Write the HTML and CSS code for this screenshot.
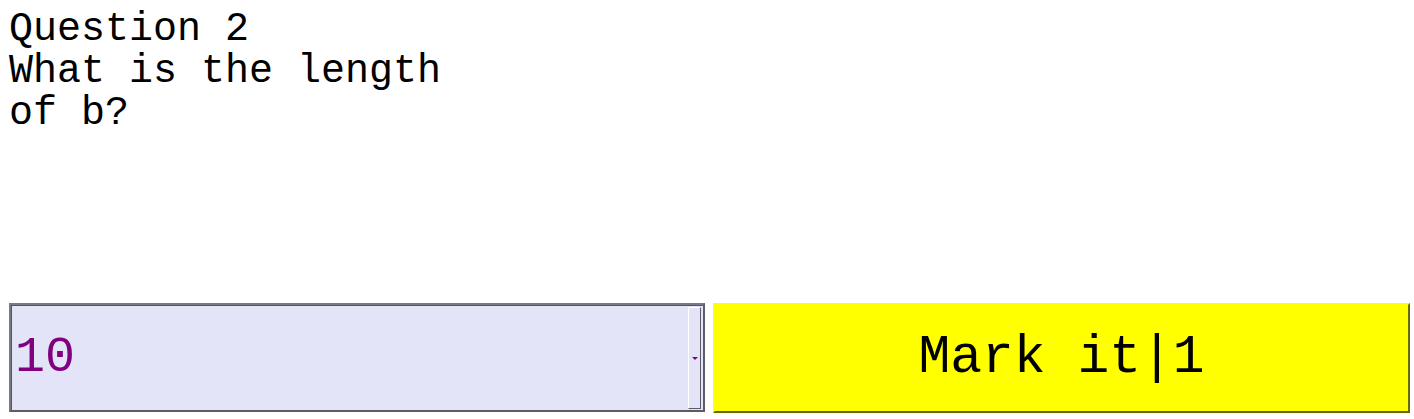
FILE: index.html
```html
<!DOCTYPE html>
<html>
<head>
<meta charset="utf-8">
<link rel="stylesheet" href="styles.css">
</head>
<body>
<div class="question">
  <div class="q-title">Question 2</div>
  <div class="q-text">What is the length of b?</div>
</div>
<div class="answer-row">
  <div class="select">
    <span class="select-value">10</span>
    <span class="select-btn"><span class="arrow"></span></span>
  </div>
  <button class="mark">Mark it|1</button>
</div>
</body>
</html>
```
FILE: styles.css
```css
html, body {
  margin: 0;
  padding: 0;
  background: #ffffff;
}
body {
  padding: 8px 4px 0 9px;
  font-family: "Liberation Mono", "Courier New", monospace;
}
.question {
  width: 460px;
  height: 294px;
  font-size: 40px;
  line-height: 42px;
  color: #000;
  margin-top: 1px;
}
.answer-row {
  display: flex;
  gap: 8px;
}
.select {
  box-sizing: border-box;
  width: 697px;
  height: 109px;
  background: #e4e4f8;
  border: 2px solid;
  border-color: #7a7a86 #5c5c66 #5c5c66 #7a7a86;
  box-shadow: inset 1px 1px 0 #55555f;
  display: flex;
  align-items: center;
  padding: 2px 1px 1px 4px;
}
.select-value {
  flex: 1;
  color: #800080;
  font-size: 50px;
  line-height: 1;
}
.select-btn {
  align-self: stretch;
  width: 13px;
  box-sizing: border-box;
  border-left: 1px solid #ffffff;
  border-top: 1px solid #ffffff;
  border-right: 1px solid #5c5c66;
  border-bottom: 1px solid #5c5c66;
  display: flex;
  align-items: center;
  justify-content: center;
  margin: 0 1px 0 0;
}
.arrow {
  width: 0;
  height: 0;
  border-left: 3px solid transparent;
  border-right: 3px solid transparent;
  border-top: 3px solid #800080;
}
.mark {
  box-sizing: border-box;
  width: 698px;
  height: 110px;
  background: #ffff00;
  border: 2px solid;
  border-color: #ffff00 #6a6a00 #6a6a00 #ffff00;
  font-family: "Liberation Mono", "Courier New", monospace;
  font-size: 53px;
  color: #000;
  padding: 0;
  margin: 0;
  cursor: pointer;
}
```
